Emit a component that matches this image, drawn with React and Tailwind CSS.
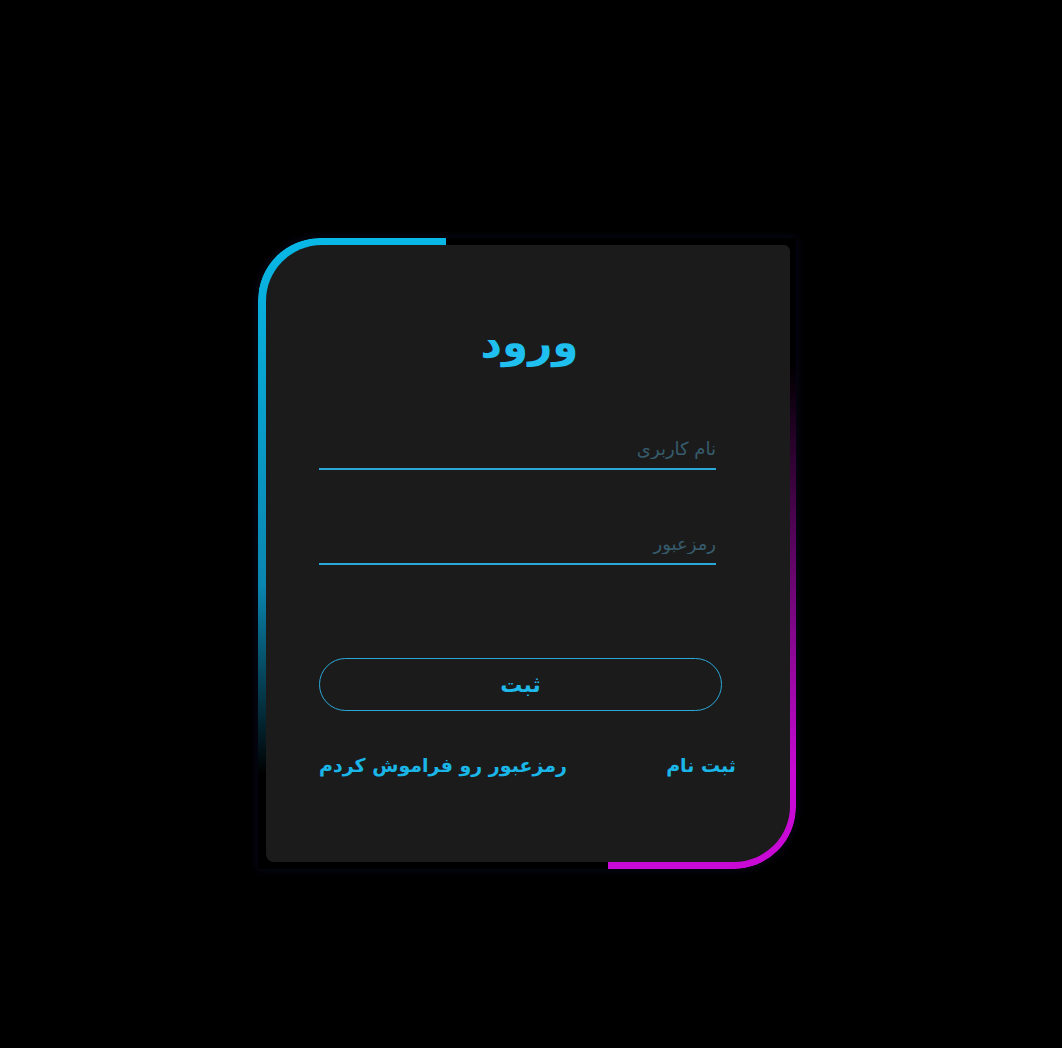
export default function App() {
  return (
    <div className="min-h-[1048px] w-full bg-black flex items-start justify-center pt-[238px] pr-[8px]">
      <div className="relative w-[538px] h-[631px] rounded-tl-[62px] rounded-br-[62px] overflow-hidden shadow-[0_0_10px_#0a0a24]">
        <div className="absolute left-0 top-0 w-[35%] h-full rounded-tl-[62px] bg-gradient-to-b from-[#08b8e6] via-[#0a86b0] via-55% to-transparent to-85%" />
        <div className="absolute right-0 bottom-0 w-[35%] h-full rounded-br-[62px] bg-gradient-to-b from-transparent from-20% to-[#c90ad6] to-85%" />
        <div className="absolute inset-0 bg-[#0b0b1e] -z-10" />
        <div
          className="absolute left-[8px] top-[7px] right-[6px] bottom-[7px] rounded-tl-[56px] rounded-tr-[6px] rounded-bl-[8px] rounded-br-[56px] bg-[#1b1b1b] pl-[53px] pt-[73px] flex flex-col"
          style={{ fontFamily: '"DejaVu Sans", "Liberation Sans", sans-serif' }}
        >
          <h1 dir="rtl" className="w-[417px] text-center pl-[4px] text-[42px] leading-[50px] font-bold text-[#1fbff0]">
            ورود
          </h1>
          <input
            dir="rtl"
            placeholder="نام کاربری"
            className="mt-[57px] w-[397px] h-[45px] pt-[4px] bg-transparent border-b-2 border-[#2aa8d8] text-right text-[18px] text-[#3b6a80] placeholder:text-[#365b6c] outline-none"
          />
          <input
            dir="rtl"
            type="password"
            placeholder="رمزعبور"
            className="mt-[50px] w-[397px] h-[45px] pt-[4px] bg-transparent border-b-2 border-[#2aa8d8] text-right text-[18px] text-[#3b6a80] placeholder:text-[#365b6c] outline-none"
          />
          <button className="mt-[93px] w-[403px] h-[53px] rounded-full border border-[#2aa8d8] text-[22px] font-bold text-[#1fb8e8]">
            ثبت
          </button>
          <div className="mt-[40px] w-[417px] flex items-center justify-between text-[19px] font-bold text-[#1ab6e8]">
            <a dir="rtl">رمزعبور رو فراموش کردم</a>
            <a dir="rtl">ثبت نام</a>
          </div>
        </div>
      </div>
    </div>
  );
}
